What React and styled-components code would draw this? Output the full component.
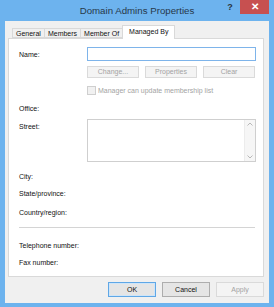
import React from "react";
import styled, { createGlobalStyle } from "styled-components";

const Global = createGlobalStyle`
    html, body {
        margin: 0;
        padding: 0;
        background: #6db3ee;
    }
    * {
        box-sizing: border-box;
    }
`;

const Window = styled.div`
    width: 274px;
    height: 307px;
    background: #6db3ee;
    display: flex;
    flex-direction: column;
    font-family: "Liberation Sans", Arial, sans-serif;
    font-size: 7px;
    color: #111;
`;

const TitleBar = styled.div`
    height: 21px;
    display: grid;
    grid-template-columns: 1fr auto 1fr;
    align-items: start;
`;

const Title = styled.div`
    grid-column: 2;
    font-size: 9.7px;
    line-height: 21px;
    color: #27384a;
    white-space: nowrap;
`;

const Controls = styled.div`
    grid-column: 3;
    justify-self: end;
    display: flex;
    align-items: flex-start;
    margin-right: 5px;
`;

const HelpButton = styled.div`
    width: 20px;
    height: 14px;
    font-size: 9px;
    font-weight: bold;
    line-height: 14px;
    text-align: center;
    color: #2a3440;
`;

const CloseButton = styled.div`
    width: 29px;
    height: 14px;
    background: #c75050;
    color: #fff;
    font-size: 10px;
    font-weight: bold;
    line-height: 13px;
    text-align: center;
`;

const Client = styled.div`
    flex: 1;
    margin: 0 5px 4px 5px;
    background: #f0f0f0;
    display: flex;
    flex-direction: column;
    padding: 4px 5px 0 3px;
`;

const TabStrip = styled.div`
    display: flex;
    align-items: flex-end;
    height: 13px;
    padding-left: 4px;
    position: relative;
    z-index: 1;
`;

const Tab = styled.div`
    height: ${(p) => (p.$active ? "14px" : "10px")};
    padding: 0 ${(p) => (p.$active ? "6px" : "3px")};
    margin: ${(p) => (p.$active ? "0 -1px -1px -1px" : "0")};
    border: 1px solid #d9d9d9;
    border-bottom: ${(p) => (p.$active ? "none" : "1px solid #d9d9d9")};
    border-left: ${(p) => (p.$first || p.$active ? "1px solid #d9d9d9" : "none")};
    background: ${(p) => (p.$active ? "#ffffff" : "#f0f0f0")};
    line-height: ${(p) => (p.$active ? "11px" : "9px")};
    white-space: nowrap;
    color: #111;
`;

const Panel = styled.div`
    height: 239px;
    border: 1px solid #d9d9d9;
    background: #ffffff;
    display: flex;
    flex-direction: column;
    padding: 8px 7px 0 10px;
`;

const Row = styled.div`
    display: flex;
    align-items: ${(p) => (p.$top ? "flex-start" : "center")};
    height: ${(p) => p.$h}px;
    margin-top: ${(p) => p.$mt || 0}px;
`;

const Label = styled.div`
    width: 68px;
    flex: none;
    white-space: nowrap;
    padding-top: ${(p) => p.$pt || 0}px;
`;

const Field = styled.div`
    flex: 1;
    display: flex;
    align-items: center;
    gap: 6px;
    height: 100%;
`;

const TextInput = styled.div`
    flex: 1;
    height: 100%;
    border: 1px solid #7eb4ea;
    background: #fff;
`;

const SmallButton = styled.div`
    width: 52px;
    height: 12px;
    border: 1px solid #dadada;
    background: #f4f4f4;
    color: #a3a3a3;
    text-align: center;
    line-height: 10px;
`;

const CheckBox = styled.div`
    width: 9px;
    height: 9px;
    border: 1px solid #cfcfcf;
    background: #f1f1f1;
    flex: none;
`;

const CheckText = styled.span`
    color: #a3a3a3;
    margin-left: -4px;
`;

const TextArea = styled.div`
    flex: 1;
    height: 100%;
    border: 1px solid #cfcfcf;
    background: #fff;
    display: flex;
    justify-content: flex-end;
`;

const ScrollBar = styled.div`
    width: 11px;
    background: #f6f6f6;
    border-left: 1px solid #ececec;
    display: flex;
    flex-direction: column;
    justify-content: space-between;
    align-items: center;
    padding: 2px 0;
`;

const Divider = styled.div`
    height: 1px;
    background: #d4d4d4;
    margin-top: 8px;
    margin-right: 1px;
`;

const Footer = styled.div`
    display: flex;
    justify-content: flex-end;
    gap: 6px;
    padding-top: 5px;
`;

const DialogButton = styled.div`
    width: 48px;
    height: 15px;
    border: 1px solid ${(p) => (p.$default ? "#5fa7e6" : p.$disabled ? "#dadada" : "#adadad")};
    background: ${(p) => (p.$disabled ? "#f4f4f4" : "#e5e5e5")};
    color: ${(p) => (p.$disabled ? "#a3a3a3" : "#111")};
    text-align: center;
    line-height: 13px;
    box-shadow: ${(p) => (p.$default ? "inset 0 0 0 1px #cfe5f8" : "none")};
`;

const Arrow = ({ up }) => (
    <svg width="6" height="4" viewBox="0 0 6 4">
        <path
            d={up ? "M0.5 3.5 L3 1 L5.5 3.5" : "M0.5 0.5 L3 3 L5.5 0.5"}
            fill="none"
            stroke="#b8b8b8"
            strokeWidth="1"
        />
    </svg>
);

const tabs = ["General", "Members", "Member Of", "Managed By"];

function App() {
    return (
        <Window>
            <Global />
            <TitleBar>
                <Title>Domain Admins Properties</Title>
                <Controls>
                    <HelpButton>?</HelpButton>
                    <CloseButton>✕</CloseButton>
                </Controls>
            </TitleBar>
            <Client>
                <TabStrip>
                    {tabs.map((t, i) => (
                        <Tab key={t} $first={i === 0} $active={i === 3}>
                            {t}
                        </Tab>
                    ))}
                </TabStrip>
                <Panel>
                    <Row $h={14}>
                        <Label>Name:</Label>
                        <Field>
                            <TextInput />
                        </Field>
                    </Row>
                    <Row $h={12} $mt={5}>
                        <Label />
                        <Field>
                            <SmallButton>Change...</SmallButton>
                            <SmallButton>Properties</SmallButton>
                            <SmallButton>Clear</SmallButton>
                        </Field>
                    </Row>
                    <Row $h={12} $mt={6}>
                        <Label />
                        <Field>
                            <CheckBox />
                            <CheckText>Manager can update membership list</CheckText>
                        </Field>
                    </Row>
                    <Row $h={14} $mt={5}>
                        <Label>Office:</Label>
                    </Row>
                    <Row $h={43} $mt={4} $top>
                        <Label $pt={4}>Street:</Label>
                        <Field>
                            <TextArea>
                                <ScrollBar>
                                    <Arrow up />
                                    <Arrow />
                                </ScrollBar>
                            </TextArea>
                        </Field>
                    </Row>
                    <Row $h={14} $mt={7}>
                        <Label>City:</Label>
                    </Row>
                    <Row $h={14} $mt={3}>
                        <Label>State/province:</Label>
                    </Row>
                    <Row $h={14} $mt={5}>
                        <Label>Country/region:</Label>
                    </Row>
                    <Divider />
                    <Row $h={14} $mt={10}>
                        <Label>Telephone number:</Label>
                    </Row>
                    <Row $h={14} $mt={3}>
                        <Label>Fax number:</Label>
                    </Row>
                </Panel>
                <Footer>
                    <DialogButton $default>OK</DialogButton>
                    <DialogButton>Cancel</DialogButton>
                    <DialogButton $disabled>Apply</DialogButton>
                </Footer>
            </Client>
        </Window>
    );
}

export default App;
